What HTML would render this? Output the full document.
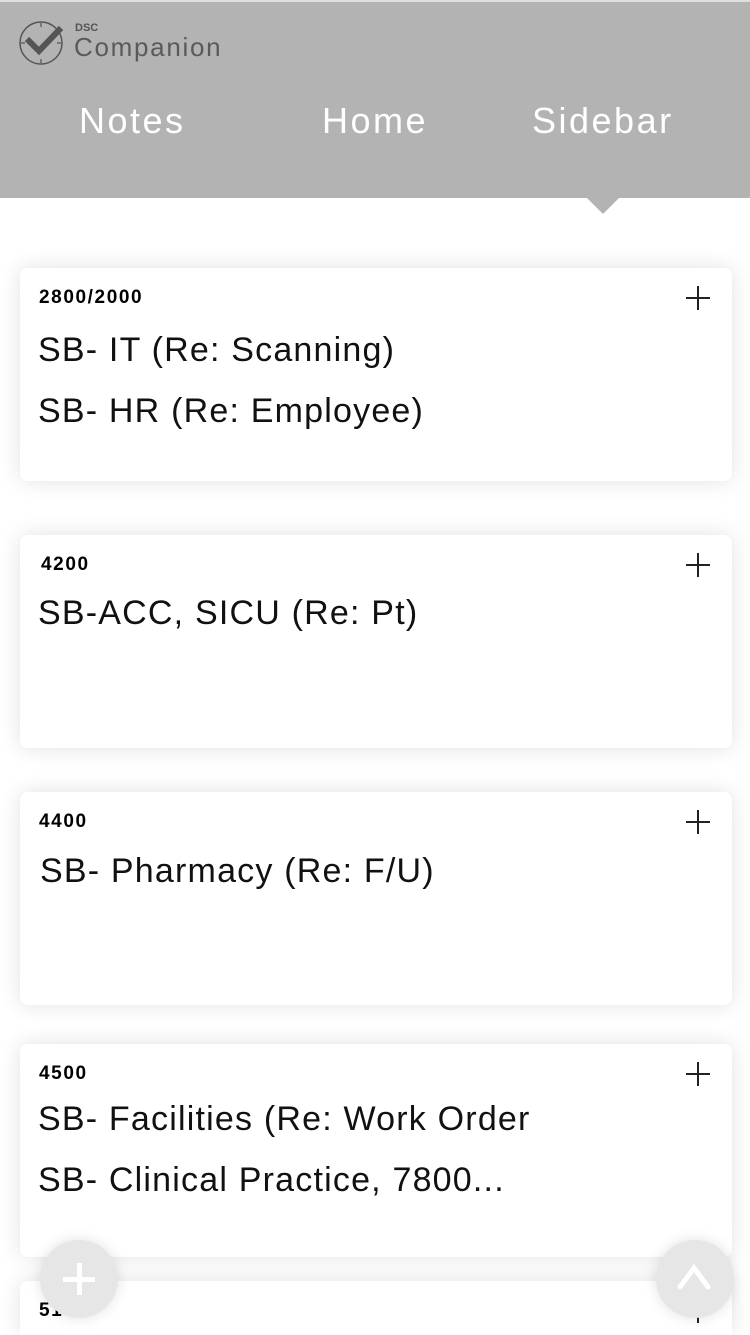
<!DOCTYPE html>
<html style="width:750px;height:1335px;overflow:hidden"><head><style>
*{margin:0;padding:0;box-sizing:border-box}
body{width:750px;height:1335px;overflow:hidden;background:#fff;font-family:"Liberation Sans",sans-serif;position:relative}
.hdr{position:absolute;left:0;top:0;width:750px;height:198px;background:#b3b3b3;border-top:2px solid #e0e0e0}
.tri{position:absolute;left:587px;top:198px;width:0;height:0;border-left:16px solid transparent;border-right:16px solid transparent;border-top:16px solid #b3b3b3}
.nav{position:absolute;top:98px;color:#fff;font-size:36px;letter-spacing:2.5px}
.card{position:absolute;left:20px;width:712px;height:213px;background:#fff;border-radius:8px;box-shadow:0 0 22px rgba(0,0,0,0.12)}
.num{position:absolute;left:19px;top:19px;font-size:19px;font-weight:bold;color:#000;letter-spacing:1.6px}
.plus{position:absolute;right:22px;top:18px;width:24px;height:24px}
.plus:before{content:"";position:absolute;left:11px;top:0;width:2px;height:24px;background:#222}
.plus:after{content:"";position:absolute;left:0;top:11px;width:24px;height:2px;background:#222}
.t{position:absolute;left:18px;font-size:34px;color:#111;letter-spacing:1.2px}
.fab{position:absolute;width:78px;height:78px;border-radius:50%;background:#e6e6e6;box-shadow:0 0 14px rgba(0,0,0,0.12)}
</style></head><body>
<div class="hdr">
<svg style="position:absolute;left:18px;top:16px" width="48" height="48" viewBox="0 0 48 48"><circle cx="23" cy="25" r="21" fill="none" stroke="#555" stroke-width="1.5"/><g stroke="#555" stroke-width="1.2"><line x1="23" y1="5" x2="23" y2="9"/><line x1="23" y1="41" x2="23" y2="45"/><line x1="3" y1="25" x2="7" y2="25"/><line x1="39" y1="25" x2="43" y2="25"/></g><path d="M9 21 L21 33 L43 10" fill="none" stroke="#555" stroke-width="6"/></svg>
<div style="position:absolute;left:75px;top:20px;font-size:11px;font-weight:bold;color:#555">DSC</div>
<div style="position:absolute;left:74px;top:30px;font-size:26px;color:#5a5a5a;letter-spacing:1.7px">Companion</div>
<div class="nav" style="left:79px">Notes</div>
<div class="nav" style="left:322px">Home</div>
<div class="nav" style="left:532px">Sidebar</div>
</div>
<div class="tri"></div>
<div class="card" style="top:268px"><div class="num">2800/2000</div><div class="plus"></div><div class="t" style="top:63px">SB- IT (Re: Scanning)</div><div class="t" style="top:124px">SB- HR (Re: Employee)</div></div>
<div class="card" style="top:535px"><div class="num" style="left:21px">4200</div><div class="plus"></div><div class="t" style="top:59px">SB-ACC, SICU (Re: Pt)</div></div>
<div class="card" style="top:792px"><div class="num">4400</div><div class="plus"></div><div class="t" style="left:20px;top:60px">SB- Pharmacy (Re: F/U)</div></div>
<div class="card" style="top:1044px"><div class="num">4500</div><div class="plus"></div><div class="t" style="top:56px">SB- Facilities (Re: Work Order</div><div class="t" style="top:117px">SB- Clinical Practice, 7800...</div></div>
<div class="card" style="top:1281px;height:54px;border-radius:8px 8px 0 0"><div class="num">5100</div><div class="plus"></div></div>
<div class="fab" style="left:40px;top:1240px"><div style="position:absolute;left:37px;top:23px;width:5px;height:32px;background:#fff"></div><div style="position:absolute;left:23px;top:37px;width:32px;height:5px;background:#fff"></div></div>
<div class="fab" style="left:656px;top:1240px"><svg width="78" height="78" viewBox="0 0 78 78"><path d="M24 47 L38 28 L52 47" fill="none" stroke="#fff" stroke-width="5" stroke-linecap="round"/></svg></div>
</body></html>
